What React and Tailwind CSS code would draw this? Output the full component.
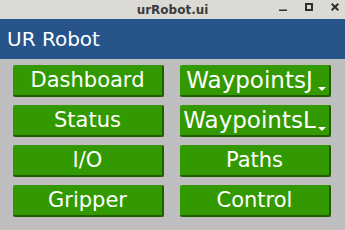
export default function App() {
  const left = ['Dashboard', 'Status', 'I/O', 'Gripper'];
  const right = ['WaypointsJ', 'WaypointsL', 'Paths', 'Control'];
  const combos = ['WaypointsJ', 'WaypointsL'];

  return (
    <div
      className="flex h-[230px] w-[345px] flex-col bg-[#bebebe]"
      style={{ fontFamily: '"DejaVu Sans", sans-serif' }}
    >
      <div className="relative flex h-[19px] items-center justify-center bg-[#dcdad5]">
        <span className="text-[12px] font-bold text-[#3b3b3b]">urRobot.ui</span>
        <div className="absolute right-[6px] top-[3px] flex gap-[18px] text-[#2e2e2e]">
          <svg width="8" height="8" viewBox="0 0 8 8">
            <rect x="0" y="6.5" width="8" height="2" fill="currentColor" />
          </svg>
          <svg width="8" height="8" viewBox="0 0 8 8">
            <rect x="1" y="1" width="6" height="6" fill="none" stroke="currentColor" strokeWidth="2" />
          </svg>
          <svg width="8" height="8" viewBox="0 0 8 8">
            <path d="M0.7 0.7 L7.3 7.3 M7.3 0.7 L0.7 7.3" stroke="currentColor" strokeWidth="2" />
          </svg>
        </div>
      </div>

      <div className="flex h-[40px] items-center bg-[#27548b] pl-[7px]">
        <span className="text-[20px] text-white">UR Robot</span>
      </div>

      <div className="grid grid-cols-2 gap-x-[16px] gap-y-[8px] pl-[13px] pr-[14px] pt-[6px]">
        {left.map((l, i) => (
          <>
            <Btn key={l} label={l} />
            {combos.includes(right[i]) ? (
              <Combo key={right[i]} label={right[i]} />
            ) : (
              <Btn key={right[i]} label={right[i]} />
            )}
          </>
        ))}
      </div>
    </div>
  );
}

function Btn({ label }) {
  return (
    <button
      type="button"
      className="flex h-[32px] items-center justify-center rounded-[2px] border-b-2 border-r-2 border-[#1f5e00] bg-[#339900] text-[21px] leading-none text-white"
    >
      {label}
    </button>
  );
}

function Combo({ label }) {
  return (
    <button
      type="button"
      className="relative flex h-[32px] items-center justify-center rounded-[2px] border-b-2 border-r-2 border-[#1f5e00] bg-[#339900] pr-[10px] text-[23px] leading-none text-white"
    >
      {label}
      <svg className="absolute bottom-[4px] right-[3px]" width="8" height="4" viewBox="0 0 8 4">
        <path d="M0 0 H8 L4 4 Z" fill="white" />
      </svg>
    </button>
  );
}
